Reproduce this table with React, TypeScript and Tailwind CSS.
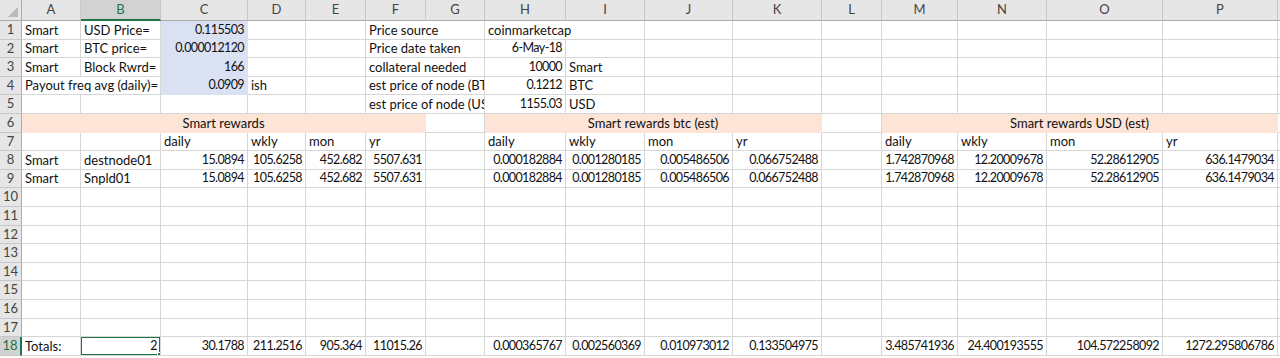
type Cell = {
  text?: string
  span?: number
  align?: 'left' | 'right' | 'center'
  fill?: 'blue' | 'peach'
  selected?: boolean
}

const COLS = ['A', 'B', 'C', 'D', 'E', 'F', 'G', 'H', 'I', 'J', 'K', 'L', 'M', 'N', 'O', 'P']

const e = (n: number): Cell[] => Array.from({ length: n }, () => ({}))
const r = (text: string): Cell => ({ text, align: 'right' })
const l = (text: string): Cell => ({ text })

const rows: Cell[][] = [
  [l('Smart'), l('USD Price='), { text: '0.115503', align: 'right', fill: 'blue' }, {}, {}, { text: 'Price source', span: 2 }, { text: 'coinmarketcap', span: 2 }, ...e(7)],
  [l('Smart'), l('BTC price='), { text: '0.000012120', align: 'right', fill: 'blue' }, {}, {}, { text: 'Price date taken', span: 2 }, r('6-May-18'), {}, ...e(7)],
  [l('Smart'), l('Block Rwrd='), { text: '166', align: 'right', fill: 'blue' }, {}, {}, { text: 'collateral needed', span: 2 }, r('10000'), l('Smart'), ...e(7)],
  [{ text: 'Payout freq avg (daily)=', span: 2 }, { text: '0.0909', align: 'right', fill: 'blue' }, l('ish'), {}, { text: 'est price of node (BTC)', span: 2 }, r('0.1212'), l('BTC'), ...e(7)],
  [{}, {}, {}, {}, {}, { text: 'est price of node (USD)', span: 2 }, r('1155.03'), l('USD'), ...e(7)],
  [
    { text: 'Smart rewards', span: 6, align: 'center', fill: 'peach' },
    {},
    { text: 'Smart rewards btc (est)', span: 4, align: 'center', fill: 'peach' },
    {},
    { text: 'Smart rewards USD (est)', span: 4, align: 'center', fill: 'peach' },
  ],
  [{}, {}, l('daily'), l('wkly'), l('mon'), l('yr'), {}, l('daily'), l('wkly'), l('mon'), l('yr'), {}, l('daily'), l('wkly'), l('mon'), l('yr')],
  [l('Smart'), l('destnode01'), r('15.0894'), r('105.6258'), r('452.682'), r('5507.631'), {}, r('0.000182884'), r('0.001280185'), r('0.005486506'), r('0.066752488'), {}, r('1.742870968'), r('12.20009678'), r('52.28612905'), r('636.1479034')],
  [l('Smart'), l('Snpld01'), r('15.0894'), r('105.6258'), r('452.682'), r('5507.631'), {}, r('0.000182884'), r('0.001280185'), r('0.005486506'), r('0.066752488'), {}, r('1.742870968'), r('12.20009678'), r('52.28612905'), r('636.1479034')],
  e(16),
  e(16),
  e(16),
  e(16),
  e(16),
  e(16),
  e(16),
  e(16),
  [l('Totals:'), { text: '2', align: 'right', selected: true }, r('30.1788'), r('211.2516'), r('905.364'), r('11015.26'), {}, r('0.000365767'), r('0.002560369'), r('0.010973012'), r('0.133504975'), {}, r('3.485741936'), r('24.400193555'), r('104.572258092'), r('1272.295806786')],
]

const spanClass: Record<number, string> = {
  1: '',
  2: 'col-span-2',
  4: 'col-span-4',
  6: 'col-span-6',
}

const SheetCell = ({ cell }: { cell: Cell }) => {
  const bg = cell.fill === 'blue' ? 'bg-[#d9e1f2] border-[#d9e1f2]' : cell.fill === 'peach' ? 'bg-[#fce4d6] border-[#fce4d6]' : 'bg-white border-[#d6d6d6]'
  const align = cell.align === 'right' ? 'justify-end' : cell.align === 'center' ? 'justify-center' : 'justify-start'
  // numbers: Calibri figures are narrow, so tighten them a bit
  const num = cell.align === 'right' ? 'text-[12.5px] tracking-[-0.6px]' : ''
  return (
    <div className={`relative flex items-end pb-[1px] px-[3px] border-r border-b overflow-hidden whitespace-nowrap ${bg} ${align} ${spanClass[cell.span || 1]}`}>
      <span className={`leading-[16px] ${num}`}>{cell.text}</span>
      {cell.selected && (
        <>
          <div className="absolute inset-[-1px] border-2 border-[#217346]" />
          <div className="absolute right-[-3px] bottom-[-3px] w-[6px] h-[6px] bg-[#217346] border border-white" />
        </>
      )}
    </div>
  )
}

export default function App() {
  return (
    <div className="w-[1280px] h-[358px] overflow-hidden bg-white text-[13px] text-[#111] font-['Lato','Liberation_Sans',sans-serif]">
      <div className="grid grid-cols-[22px_59px_80px_87px_58px_60px_60px_59px_81px_79px_88px_89px_60px_76px_89px_116px_115px_1fr] grid-rows-[21px_repeat(18,18.6px)]">
        {/* corner */}
        <div className="relative bg-[#e6e6e6] border-r border-b border-[#ababab]">
          <svg className="absolute right-[3px] bottom-[3px]" width="10" height="10" viewBox="0 0 10 10">
            <polygon points="10,0 10,10 0,10" fill="#b8b8b8" />
          </svg>
        </div>
        {COLS.map((c) => (
          <div
            key={c}
            className={`flex items-center justify-center border-r border-[#c8c8c8] ${
              c === 'B' ? 'bg-[#d2d2d2] text-[#217346] border-b-2 border-b-[#217346]' : 'bg-[#e6e6e6] text-[#444] border-b border-b-[#ababab]'
            }`}
          >
            {c}
          </div>
        ))}
        <div className="bg-[#e6e6e6] border-b border-[#ababab]" />

        {rows.map((row, i) => (
          <Row key={i} n={i + 1} cells={row} />
        ))}
      </div>
    </div>
  )
}

const Row = ({ n, cells }: { n: number; cells: Cell[] }) => {
  const used = cells.reduce((s, c) => s + (c.span || 1), 0)
  const pad = 16 - used
  const active = n === 18
  return (
    <>
      <div
        className={`flex items-center justify-center border-b border-[#c8c8c8] ${
          active ? 'bg-[#d2d2d2] text-[#217346] border-r-2 border-r-[#217346]' : 'bg-[#e6e6e6] text-[#444] border-r border-r-[#ababab]'
        }`}
      >
        {n}
      </div>
      {cells.map((c, j) => (
        <SheetCell key={j} cell={c} />
      ))}
      {Array.from({ length: pad }, (_, k) => (
        <SheetCell key={'p' + k} cell={{}} />
      ))}
      <div className="bg-white border-b border-[#d6d6d6]" />
    </>
  )
}
